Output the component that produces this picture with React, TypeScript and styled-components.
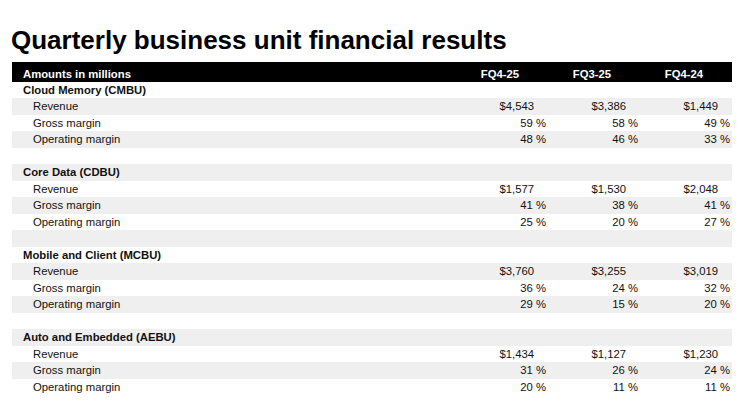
import React from "react";
import styled, { createGlobalStyle } from "styled-components";

const Global = createGlobalStyle`
  html, body { margin: 0; padding: 0; background: #ffffff; }
  body { font-family: "Liberation Sans", Arial, sans-serif; color: #111; }
`;

const Page = styled.div`
  width: 740px;
  height: 403px;
  box-sizing: border-box;
  padding: 24.6px 8px 0 12px;
  overflow: hidden;
`;

const Title = styled.h1`
  margin: 0 0 7px -1px;
  font-size: 26px;
  line-height: 30px;
  font-weight: 700;
  color: #000;
  letter-spacing: 0;
`;

const Table = styled.div`
  display: flex;
  flex-direction: column;
  width: 720px;
`;

const Grid = styled.div`
  display: grid;
  grid-template-columns: 1fr 92px 92px 92px;
  padding-right: 2px;
  font-size: 11.3px;
`;

const HeaderRow = styled(Grid)`
  height: 20px;
  box-sizing: border-box;
  padding-top: 4px;
  background: #000;
  color: #fff;
  font-weight: 700;
  line-height: 16px;
`;

const HeaderLabel = styled.div`
  padding-left: 11px;
`;

const HeaderCell = styled.div`
  text-align: center;
`;

const Row = styled(Grid)<{ $shade: boolean }>`
  height: 16.5px;
  line-height: 16.5px;
  background: ${(p) => (p.$shade ? "#efefef" : "#ffffff")};
`;

const Label = styled.div<{ $section: boolean }>`
  padding-left: ${(p) => (p.$section ? "11px" : "21px")};
  font-weight: ${(p) => (p.$section ? 700 : 400)};
  white-space: nowrap;
`;

const Value = styled.div<{ $money: boolean }>`
  text-align: right;
  padding-right: ${(p) => (p.$money ? "12px" : "0")};
  white-space: nowrap;
`;

type Line =
  | { kind: "section"; label: string }
  | { kind: "blank" }
  | { kind: "data"; label: string; values: string[]; money: boolean };

const units: { name: string; rev: string[]; gm: string[]; om: string[] }[] = [
  { name: "Cloud Memory (CMBU)", rev: ["$4,543", "$3,386", "$1,449"], gm: ["59 %", "58 %", "49 %"], om: ["48 %", "46 %", "33 %"] },
  { name: "Core Data (CDBU)", rev: ["$1,577", "$1,530", "$2,048"], gm: ["41 %", "38 %", "41 %"], om: ["25 %", "20 %", "27 %"] },
  { name: "Mobile and Client (MCBU)", rev: ["$3,760", "$3,255", "$3,019"], gm: ["36 %", "24 %", "32 %"], om: ["29 %", "15 %", "20 %"] },
  { name: "Auto and Embedded (AEBU)", rev: ["$1,434", "$1,127", "$1,230"], gm: ["31 %", "26 %", "24 %"], om: ["20 %", "11 %", "11 %"] },
];

const lines: Line[] = [];
units.forEach((u, i) => {
  if (i > 0) lines.push({ kind: "blank" });
  lines.push({ kind: "section", label: u.name });
  lines.push({ kind: "data", label: "Revenue", values: u.rev, money: true });
  lines.push({ kind: "data", label: "Gross margin", values: u.gm, money: false });
  lines.push({ kind: "data", label: "Operating margin", values: u.om, money: false });
});

export default function App() {
  return (
    <>
      <Global />
      <Page>
        <Title>Quarterly business unit financial results</Title>
        <Table>
          <HeaderRow>
            <HeaderLabel>Amounts in millions</HeaderLabel>
            <HeaderCell>FQ4-25</HeaderCell>
            <HeaderCell>FQ3-25</HeaderCell>
            <HeaderCell>FQ4-24</HeaderCell>
          </HeaderRow>
          {lines.map((l, i) => {
            const shade = i % 2 === 1;
            if (l.kind === "blank") {
              return <Row key={i} $shade={shade} />;
            }
            if (l.kind === "section") {
              return (
                <Row key={i} $shade={shade}>
                  <Label $section>{l.label}</Label>
                </Row>
              );
            }
            return (
              <Row key={i} $shade={shade}>
                <Label $section={false}>{l.label}</Label>
                {l.values.map((v, j) => (
                  <Value key={j} $money={l.money}>
                    {v}
                  </Value>
                ))}
              </Row>
            );
          })}
        </Table>
      </Page>
    </>
  );
}
